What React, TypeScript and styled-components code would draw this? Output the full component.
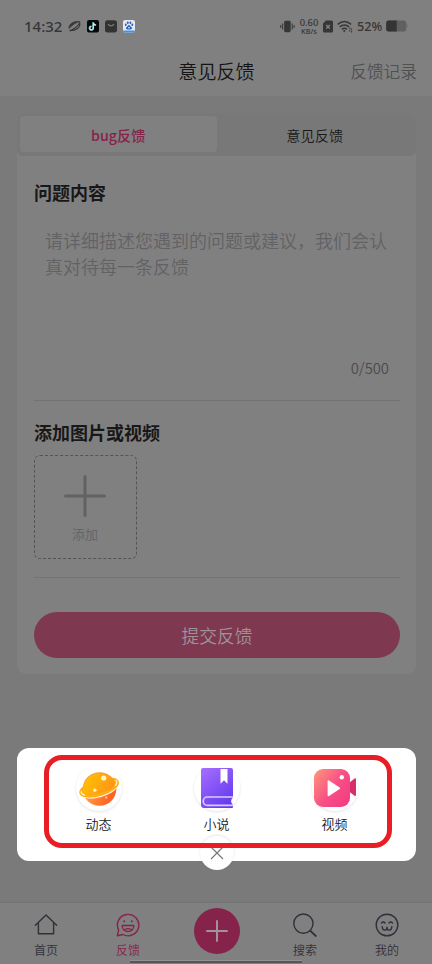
import React from 'react';
import styled, { createGlobalStyle } from 'styled-components';

const GlobalStyle = createGlobalStyle`
  * { box-sizing: border-box; }
  html, body { margin: 0; padding: 0; background: #7a7a7a; }
  body { font-family: "Noto Sans CJK SC", sans-serif; font-weight: 350; overflow: hidden; }
  svg { display: block; flex: none; }
`;

const Screen = styled.div`
  position: relative;
  width: 432px;
  height: 964px;
  display: flex;
  flex-direction: column;
  background: #7a7a7a;
  overflow: hidden;
`;

const StatusBar = styled.div`
  height: 50px;
  padding: 2px 24px 0;
  display: flex;
  align-items: center;
  justify-content: space-between;
  background: #808080;
  color: #363636;
`;

const StatusGroup = styled.div<{ $gap: number }>`
  display: flex;
  align-items: center;
  gap: ${(p) => p.$gap}px;
`;

const Clock = styled.span`
  width: 38px;
  font: 500 15px/20px "Noto Sans", sans-serif;
  white-space: nowrap;
`;

const Speed = styled.div`
  width: 20px;
  display: flex;
  flex-direction: column;
  align-items: center;
  font: 500 9.4px/9px "Noto Sans", sans-serif;
  white-space: nowrap;
`;

const SpeedUnit = styled.span`
  font-size: 7.4px;
  line-height: 8px;
`;

const Percent = styled.span`
  width: 25px;
  padding-top: 1px;
  font: 500 12.6px/18px "Noto Sans", sans-serif;
  white-space: nowrap;
`;

const Header = styled.header`
  height: 46px;
  padding: 0 15px 4px;
  display: grid;
  grid-template-columns: 1fr auto 1fr;
  align-items: center;
  background: #808080;
`;

const Title = styled.h1`
  grid-column: 2;
  margin: 0;
  padding-left: 1px;
  font-size: 19.1px;
  line-height: 28px;
  font-weight: 350;
  color: #141414;
`;

const HistoryLink = styled.span`
  justify-self: end;
  font-size: 16.7px;
  line-height: 26px;
  color: #505050;
`;

const Card = styled.main`
  margin: 17px 16px 0 17px;
  height: 561px;
  border-radius: 9px;
  background: #808080;
  overflow: hidden;
  flex: none;
`;

const Tabs = styled.div`
  height: 43px;
  padding: 3px 3px 4px;
  display: grid;
  grid-template-columns: 1fr 1fr;
  background: #787878;
  border-radius: 5px;
`;

const Tab = styled.div<{ $active?: boolean }>`
  padding-top: 1px;
  display: flex;
  align-items: center;
  justify-content: center;
  border-radius: 4px;
  background: ${(p) => (p.$active ? '#808080' : 'transparent')};
  color: ${(p) => (p.$active ? '#86234a' : '#181818')};
  font-size: 14.2px;
  font-weight: ${(p) => (p.$active ? 500 : 350)};
`;

const Form = styled.div`
  padding: 22px 16px 0 17px;
`;

const SectionTitle = styled.h2`
  margin: 0;
  font-size: 18px;
  line-height: 28px;
  font-weight: 700;
  color: #181818;
`;

const TextArea = styled.div`
  height: 149px;
  padding: 21px 11px 0;
  font-size: 18px;
  line-height: 26px;
  color: #626265;
  white-space: pre;
`;

const Counter = styled.div`
  height: 45px;
  padding-right: 11px;
  text-align: right;
  font-size: 14.8px;
  line-height: 26px;
  color: #4b4b4b;
`;

const Rule = styled.div`
  height: 1px;
  background: #737373;
`;

const Attachments = styled.section`
  height: 176px;
  padding-top: 17px;
`;

const AddTile = styled.div`
  margin-top: 9px;
  width: 103px;
  height: 104px;
  padding: 19px 1px 0 0;
  display: flex;
  flex-direction: column;
  align-items: center;
  border: 1px dashed #545454;
  border-radius: 6px;
  color: #626265;
  font-size: 13px;
  line-height: 20px;
  gap: 7px;
`;

const Submit = styled.button`
  margin-top: 34px;
  width: 100%;
  height: 46px;
  padding: 0;
  border: 0;
  border-radius: 23px;
  background: #7e3850;
  color: #a09297;
  font: 350 17.8px/44px "Noto Sans CJK SC", sans-serif;
`;

const TabBar = styled.nav`
  position: relative;
  margin-top: auto;
  height: 62px;
  padding: 0 5px;
  display: grid;
  grid-template-columns: 82px 82px 95px 82px 82px;
  border-top: 1px solid #727474;
  background: #808080;
`;

const NavItem = styled.div<{ $active?: boolean }>`
  padding-top: 10px;
  display: flex;
  flex-direction: column;
  align-items: center;
  gap: 4px;
  font-size: 12px;
  line-height: 18px;
  color: ${(p) => (p.$active ? '#86234a' : '#30303a')};
`;

const PublishButton = styled.div`
  justify-self: center;
  margin-top: 5px;
  width: 46px;
  height: 46px;
  display: grid;
  place-items: center;
  border-radius: 50%;
  background: #86234a;
`;

const HomeIndicator = styled.div`
  position: absolute;
  left: 130px;
  bottom: 1px;
  width: 172px;
  height: 3px;
  background: #555;
  border-top: 1px solid #929292;
`;

const Sheet = styled.section`
  position: absolute;
  left: 17px;
  top: 748px;
  width: 399px;
  height: 113px;
  padding: 17px 22px 0;
  display: grid;
  grid-template-columns: repeat(3, 118px);
  justify-content: center;
  border-radius: 12px;
  background: #fff;
`;

const SheetItem = styled.div`
  display: flex;
  flex-direction: column;
  align-items: center;
  gap: 4px;
  font-size: 13px;
  line-height: 18px;
  color: #181818;
`;

const IconDisc = styled.div`
  width: 46px;
  height: 46px;
  display: grid;
  place-items: center;
  border-radius: 50%;
  background: #fff;
  box-shadow: 0 1px 3px rgba(0, 0, 0, 0.11);
`;

const CloseButton = styled.div`
  position: absolute;
  left: 183px;
  top: 88px;
  width: 34px;
  height: 34px;
  display: grid;
  place-items: center;
  border-radius: 50%;
  background: #fff;
  box-shadow: 0 -1px 3px rgba(0, 0, 0, 0.1);
`;

const Highlight = styled.div`
  position: absolute;
  left: 27px;
  top: 7px;
  width: 348px;
  height: 93px;
  border: 5px solid #e91d25;
  border-radius: 18px;
`;

const LeafIcon = () => (
  <svg width="13" height="14" viewBox="0 0 14 14" fill="none" stroke="#363636">
    <path d="M1.2 9.6C.6 5 5.5 1.6 12.6 2.2 9 2.8 4 6.2 1.2 9.6Z" fill="#363636" strokeWidth=".9" />
    <path d="M12.7 3.6C13.6 8.4 9 12.2 1.6 12 5.6 11.1 10.4 7.4 12.7 3.6Z" strokeWidth="1.1" />
  </svg>
);

const TikTokIcon = () => (
  <svg width="12" height="13" viewBox="0 0 12 13" fill="none">
    <rect width="12" height="12.5" rx="2" fill="#08080c" />
    <path d="M6.4 2.4v5.8a1.8 1.8 0 1 1-1.8-1.8M6.4 2.6c.2 1.5 1.1 2.4 2.7 2.5" stroke="#36a9ac" strokeWidth="1.5" transform="translate(-.5 -.2)" />
    <path d="M6.4 2.4v5.8a1.8 1.8 0 1 1-1.8-1.8M6.4 2.6c.2 1.5 1.1 2.4 2.7 2.5" stroke="#ddd" strokeWidth="1.3" />
  </svg>
);

const BagIcon = () => (
  <svg width="12" height="13" viewBox="0 0 12 13" fill="none">
    <rect y=".3" width="12" height="12.2" rx="2.5" fill="#333" />
    <path d="M3 4q3 4 6 0" stroke="#858585" strokeWidth="1.1" />
  </svg>
);

const PawIcon = () => (
  <svg width="12" height="13" viewBox="0 0 12 13">
    <rect width="12" height="12.5" rx="2" fill="#e3e8f0" />
    <path d="M0 10.5h12v.3a1.7 1.7 0 0 1-1.7 1.7H1.7A1.7 1.7 0 0 1 0 10.8Z" fill="#3c95e4" />
    <g fill="#275bb9">
      <ellipse cx="2.8" cy="4.8" rx=".9" ry="1.2" />
      <ellipse cx="4.8" cy="2.7" rx=".9" ry="1.2" />
      <ellipse cx="7.4" cy="2.7" rx=".9" ry="1.2" />
      <ellipse cx="9.3" cy="4.8" rx=".9" ry="1.2" />
      <path d="M6 4.8 9 7.8Q9.5 10 6 9.5 2.5 10 3 7.8Z" />
    </g>
    <circle cx="6" cy="7.7" r=".9" fill="#d5dbe4" />
  </svg>
);

const VibrateIcon = () => (
  <svg width="15" height="13" viewBox="0 0 16 13" stroke="#363636" fill="none">
    <rect x="4.4" y=".4" width="7" height="12.2" rx="1.5" fill="#363636" stroke="none" />
    <path d="M2.8 3.2v6.6M.8 5v3M13 3.2v6.6M15 5v3" strokeWidth="1.1" />
  </svg>
);

const SimIcon = () => (
  <svg width="10" height="13" viewBox="0 0 10 13">
    <path d="M3 .5h5.5A1.5 1.5 0 0 1 10 2v9a1.5 1.5 0 0 1-1.5 1.5h-7A1.5 1.5 0 0 1 0 11V3.5Z" fill="#363636" />
    <path d="m3.2 5 3.6 3.6m0-3.6L3.2 8.6" stroke="#8a8a8a" strokeWidth="1.2" />
  </svg>
);

const WifiIcon = () => (
  <svg width="16" height="13" viewBox="0 0 16 13" stroke="#363636" fill="none" strokeWidth="1.5">
    <path d="M.7 4.3q6.7-5.6 13.4 0M2.7 6.8q4.7-3.8 9.4 0M4.9 9.3q2.5-2 5 0" />
    <circle cx="7.3" cy="11" r=".7" fill="#363636" strokeWidth=".7" />
    <path d="M12.8 7.5v4M14.6 8.5v4" strokeWidth="1" strokeDasharray="1.6 .8" />
  </svg>
);

const BatteryIcon = () => (
  <svg width="22" height="12" viewBox="0 0 22 12">
    <rect x=".2" y=".5" width="20" height="11" rx="2.5" fill="#606060" />
    <path d="M2.7.5h8v11h-8A2.5 2.5 0 0 1 .2 9V3A2.5 2.5 0 0 1 2.7.5Z" fill="#343434" />
    <path d="M20.6 3.4q1.8 2.6 0 5.2Z" fill="#606060" />
  </svg>
);

const PlusIcon = () => (
  <svg width="42" height="42" viewBox="0 0 42 42" stroke="#626265" strokeWidth="3" strokeLinecap="round">
    <path d="M21 1.5v39M1.5 21h39" />
  </svg>
);

const PublishIcon = () => (
  <svg width="22" height="22" viewBox="0 0 22 22" stroke="#a2929a" strokeWidth="2" strokeLinecap="round">
    <path d="M11 1v20M1 11h20" />
  </svg>
);

const lineIcon = {
  width: 24,
  height: 24,
  viewBox: '0 0 24 24',
  fill: 'none',
  stroke: 'currentColor',
  strokeWidth: 1.4,
  strokeLinecap: 'round',
  strokeLinejoin: 'round',
} as const;

const HomeIcon = () => (
  <svg {...lineIcon}>
    <path d="M1.4 12.3 12 2l10.6 10.3M4.4 9.8v11h15.2v-11" />
  </svg>
);

const FeedbackIcon = () => (
  <svg {...lineIcon}>
    <path d="M2.7 17.2A10.7 10.7 0 1 1 7 21.5L1.3 22.7Z" />
    <path d="M6.2 12.5h11.6c0 8-11.6 8-11.6 0Z" />
    <path d="M8.4 16.7q3.6-2.3 7.2 0" strokeWidth="1.2" />
    <circle cx="8.2" cy="8.2" r="1" fill="currentColor" stroke="none" />
    <circle cx="15.8" cy="8.2" r="1" fill="currentColor" stroke="none" />
  </svg>
);

const SearchIcon = () => (
  <svg {...lineIcon}>
    <circle cx="10.4" cy="10.6" r="9.6" />
    <path d="m17.2 17.6 5.6 5.4" strokeWidth="1.8" />
  </svg>
);

const ProfileIcon = () => (
  <svg {...lineIcon}>
    <circle cx="12" cy="12" r="10.8" />
    <path d="M6.5 10q1.8-2 3.6 0M13.9 10q1.8-2 3.6 0M7.2 13.7c.3 4.5 4.8 4.5 4.8.5 0 4 4.5 4 4.8-.5" />
  </svg>
);

const PlanetIcon = () => (
  <svg width="42" height="42" viewBox="0 0 42 42" fill="none">
    <defs>
      <linearGradient id="planetTop" x1="10" y1="5" x2="30" y2="28" gradientUnits="userSpaceOnUse">
        <stop stopColor="#ffc400" /><stop offset="1" stopColor="#ff9518" />
      </linearGradient>
      <linearGradient id="planetBottom" x1="10" y1="28" x2="29" y2="36" gradientUnits="userSpaceOnUse">
        <stop stopColor="#ff9b3d" /><stop offset="1" stopColor="#ff6425" />
      </linearGradient>
    </defs>
    <circle cx="21.5" cy="22" r="16.8" fill="url(#planetBottom)" />
    <g transform="rotate(-17 21 20)">
      <path d="M.5 20C1 33.5 41 33.5 41.5 20Z" fill="#fff" />
      <ellipse cx="21" cy="20.5" rx="20.6" ry="8.6" fill="#ffae16" />
      <path d="M4.4 20A16.8 16 0 0 1 37.6 20C37 28.5 5 28.5 4.4 20Z" fill="url(#planetTop)" />
      <path d="M2.6 19.2q-.8 2.6 2.2 4.4M39.2 18.6q1.2 2.6-2 4.6" stroke="#fff4cf" strokeWidth="1.2" strokeLinecap="round" />
    </g>
    <circle cx="25.7" cy="11" r="2.6" fill="#fff7c0" />
    <circle cx="16.8" cy="23.3" r="1.7" fill="#fff4b8" />
    <circle cx="28.3" cy="30.5" r="1.1" fill="#ffd3a0" />
  </svg>
);

const BookIcon = () => (
  <svg width="34" height="42" viewBox="0 0 34 42" fill="none">
    <defs>
      <linearGradient id="book" x1="2" y1="1" x2="32" y2="37" gradientUnits="userSpaceOnUse">
        <stop stopColor="#a66eff" /><stop offset="1" stopColor="#6238ee" />
      </linearGradient>
    </defs>
    <path d="M3 1h28q2 0 2 2v37q0 1-1 1H4q-3 0-3-3V3q0-2 2-2Z" fill="url(#book)" />
    <path d="M33 30H7.4a4.2 4.2 0 0 0 0 8.4H33" stroke="#dacbff" strokeWidth="1.7" />
    <path d="M33.5 30q-5 4.1 0 8.4Z" fill="#fff" />
    <path d="M20.5 2h7v14.7L24 13.2l-3.5 3.5Z" fill="#fff" />
  </svg>
);

const VideoIcon = () => (
  <svg width="44" height="42" viewBox="0 0 44 42" fill="none">
    <defs>
      <linearGradient id="camera" x1="2" y1="8" x2="35" y2="32" gradientUnits="userSpaceOnUse">
        <stop stopColor="#ff8c7a" /><stop offset=".55" stopColor="#f84f86" /><stop offset="1" stopColor="#f33f80" />
      </linearGradient>
    </defs>
    <path d="m36 16 5.5-4.5q1.5-.8 1.5 1v15.3q0 1.8-1.5 1L36 24.5Z" fill="#d92c6a" />
    <rect x="1" y="2" width="36" height="38" rx="9" fill="url(#camera)" />
    <path d="M14.6 14.4q0-1.6 1.4-.8l10.7 7q1 .7 0 1.4l-10.7 7q-1.4.8-1.4-.8Z" fill="#fff" />
    <circle cx="28.8" cy="10.2" r="2.2" fill="#fff" />
  </svg>
);

const CloseIcon = () => (
  <svg width="14" height="14" viewBox="0 0 14 14" stroke="#777" strokeWidth="1.2">
    <path d="m1 1 12 12M13 1 1 13" />
  </svg>
);

export default function App() {
  return (
    <>
      <GlobalStyle />
      <Screen>
        <StatusBar>
          <StatusGroup $gap={6}>
            <Clock>14:32</Clock>
            <LeafIcon />
            <TikTokIcon />
            <BagIcon />
            <PawIcon />
          </StatusGroup>
          <StatusGroup $gap={4}>
            <VibrateIcon />
            <Speed>
              <span>0.60</span>
              <SpeedUnit>KB/s</SpeedUnit>
            </Speed>
            <SimIcon />
            <WifiIcon />
            <Percent>52%</Percent>
            <BatteryIcon />
          </StatusGroup>
        </StatusBar>

        <Header>
          <Title>意见反馈</Title>
          <HistoryLink>反馈记录</HistoryLink>
        </Header>

        <Card>
          <Tabs>
            <Tab $active>bug反馈</Tab>
            <Tab>意见反馈</Tab>
          </Tabs>
          <Form>
            <SectionTitle>问题内容</SectionTitle>
            <TextArea>{'请详细描述您遇到的问题或建议，我们会认\n真对待每一条反馈'}</TextArea>
            <Counter>0/500</Counter>
            <Rule />
            <Attachments>
              <SectionTitle>添加图片或视频</SectionTitle>
              <AddTile>
                <PlusIcon />
                添加
              </AddTile>
            </Attachments>
            <Rule />
            <Submit>提交反馈</Submit>
          </Form>
        </Card>

        <TabBar>
          <NavItem><HomeIcon />首页</NavItem>
          <NavItem $active><FeedbackIcon />反馈</NavItem>
          <PublishButton><PublishIcon /></PublishButton>
          <NavItem><SearchIcon />搜索</NavItem>
          <NavItem><ProfileIcon />我的</NavItem>
          <HomeIndicator />
        </TabBar>

        <Sheet>
          <SheetItem><IconDisc><PlanetIcon /></IconDisc>动态</SheetItem>
          <SheetItem><IconDisc><BookIcon /></IconDisc>小说</SheetItem>
          <SheetItem><IconDisc><VideoIcon /></IconDisc>视频</SheetItem>
          <CloseButton><CloseIcon /></CloseButton>
          <Highlight />
        </Sheet>
      </Screen>
    </>
  );
}
